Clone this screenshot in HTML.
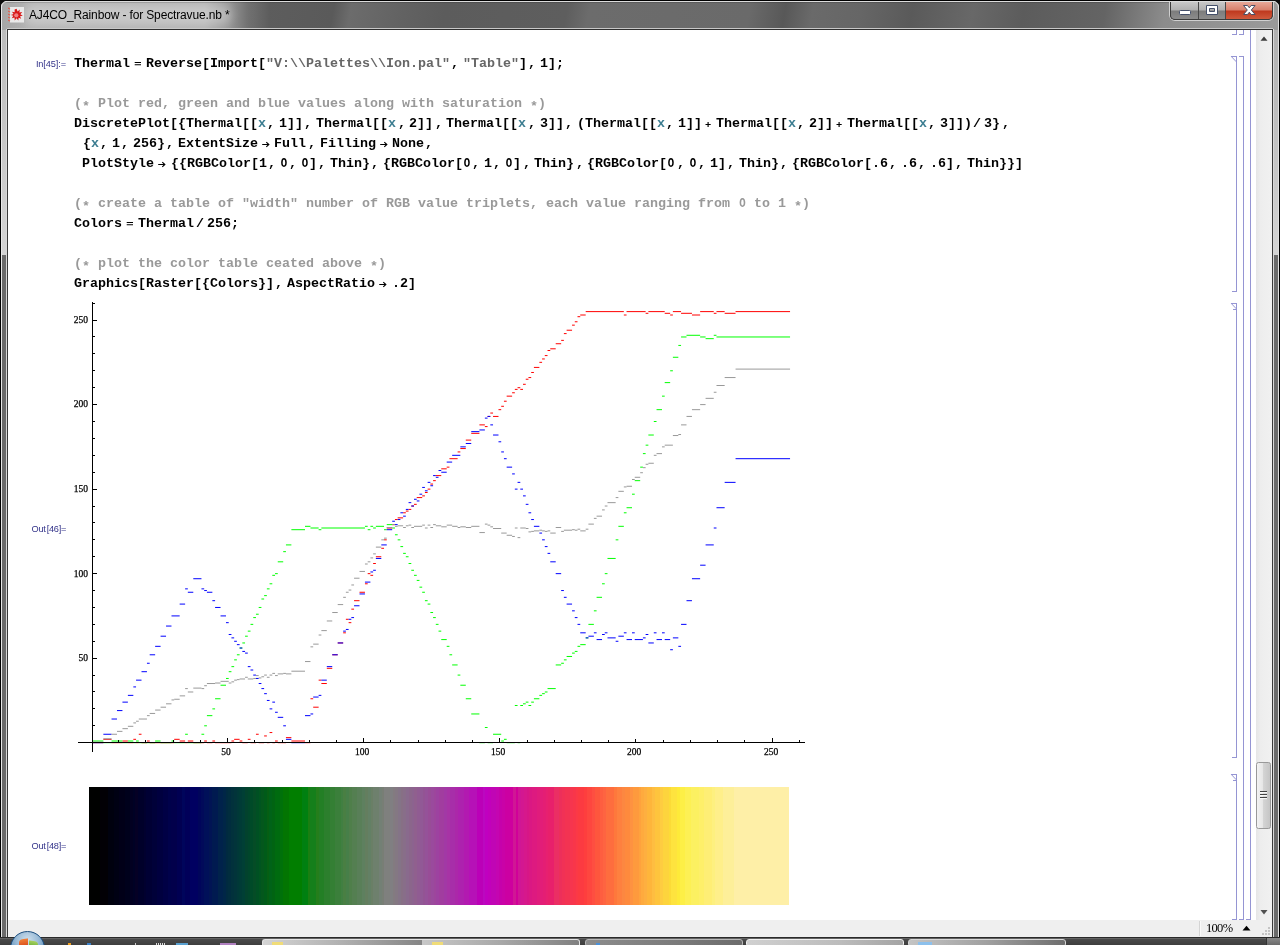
<!DOCTYPE html>
<html><head><meta charset="utf-8"><title>AJ4CO_Rainbow</title>
<style>
html,body{margin:0;padding:0;background:#fff;}
body{width:1280px;height:945px;overflow:hidden;position:relative;font-family:"Liberation Sans",sans-serif;}
.abs{position:absolute;}
.c,.lb,.tk,#title{will-change:transform;}
#frame{position:absolute;left:0;top:0;width:1280px;height:945px;background:#6a6a6a;}
#tb{position:absolute;left:0;top:0;width:1280px;height:30px;overflow:hidden;background:linear-gradient(100deg,#6a6a6a 0px,#5e5e5e 240px,#5a5a5a 330px,#6c6c6c 347px,#626262 400px,#5c5c5c 440px,#5e5e5e 560px,#6c6c6c 582px,#6a6a6a 740px,#585858 775px,#6a6a6a 802px,#666 850px,#5a5a5a 900px,#686868 960px,#5c5c5c 1010px,#646464 1090px,#8c8c8c 1150px,#9c9c9c 1279px);}
#glow{position:absolute;left:0;top:0;width:300px;height:30px;background:linear-gradient(90deg,rgba(255,255,255,.40) 0,rgba(255,255,255,.50) 30px,rgba(255,255,255,.52) 205px,rgba(255,255,255,.36) 228px,rgba(255,255,255,.12) 248px,rgba(255,255,255,0) 270px);}
#glow2{position:absolute;left:24px;top:5px;width:208px;height:20px;border-radius:10px;background:rgba(255,255,255,.28);filter:blur(4px);}
#tbtop{position:absolute;left:0;top:0;width:1280px;height:1px;background:#000;}
#tbhi{position:absolute;left:1px;top:1px;width:1278px;height:1px;background:#dcdcdc;}
#tbsh{position:absolute;left:2px;top:2px;width:1276px;height:1px;background:rgba(0,0,0,.15);}
#title{position:absolute;left:29px;top:7px;font-size:12px;line-height:16px;color:#000;white-space:pre;letter-spacing:-0.14px;}
#content{position:absolute;left:8px;top:30px;width:1264px;height:906px;background:#fff;}
.c{position:absolute;font-family:"Liberation Mono",monospace;font-weight:bold;font-size:12px;letter-spacing:0;line-height:16px;height:16px;white-space:pre;transform:scaleX(1.1111);transform-origin:0 0;}
.st{position:relative;top:2.5px}
.z{display:inline-block;width:7.2px;text-align:center;transform:scaleX(.8)}
.k{color:#000}.s{color:#666}.v{color:#3c7d91}.m{color:#999}
.ar{font-family:"Liberation Sans",sans-serif;font-weight:normal;font-size:9px;letter-spacing:0;color:#000;line-height:17px}
.lb{position:absolute;font-size:9.2px;line-height:12px;color:#34348a;white-space:pre;text-align:right;width:60px;letter-spacing:-0.1px}
.lo{letter-spacing:-0.3px}
.tk{position:absolute;font-family:"Liberation Serif",serif;font-size:9.5px;line-height:12px;color:#000;-webkit-text-stroke:0.25px #000;}
</style></head><body>
<div id="frame"></div>
<div id="tb"><div id="glow"></div><div id="glow2"></div></div><div id="tbtop"></div><div id="tbhi"></div><div id="tbsh"></div>

<!-- left frame -->
<div class="abs" style="left:0;top:0;width:1px;height:945px;background:#000"></div>
<div class="abs" style="left:1px;top:1px;width:1px;height:937px;background:#e8e8e8"></div>
<div class="abs" style="left:2px;top:30px;width:5px;height:225px;background:linear-gradient(180deg,#bcbcbc,#d4d4d4)"></div>
<div class="abs" style="left:2px;top:255px;width:5px;height:682px;background:#6b6b6b"></div>
<div class="abs" style="left:6px;top:29px;width:1px;height:908px;background:#d8d8d8"></div>
<div class="abs" style="left:7px;top:29px;width:1px;height:908px;background:#3a3a3a"></div>
<!-- right frame -->
<div class="abs" style="left:1279px;top:0;width:1px;height:945px;background:#000"></div>
<div class="abs" style="left:1278px;top:1px;width:1px;height:937px;background:#e0e0e0"></div>
<div class="abs" style="left:1274px;top:30px;width:4px;height:225px;background:linear-gradient(180deg,#b0b0b0,#d4d4d4)"></div>
<div class="abs" style="left:1274px;top:255px;width:4px;height:682px;background:#6b6b6b"></div>
<div class="abs" style="left:1273px;top:29px;width:1px;height:908px;background:#d8d8d8"></div>
<div class="abs" style="left:1272px;top:29px;width:1px;height:908px;background:#3a3a3a"></div>
<!-- title bottom edge -->
<div class="abs" style="left:7px;top:28px;width:1266px;height:1px;background:#c8c8c8"></div>
<div class="abs" style="left:7px;top:29px;width:1266px;height:1px;background:#303030"></div>
<!-- corners -->
<svg class="abs" style="left:0;top:0" width="10" height="10"><path d="M0 0H10V1H7C3.500 1 1 3.500 1 7V10H0Z" fill="#0c0c0c"/><path d="M7 1.500C4 1.500 1.500 4 1.500 7" stroke="#e4e4e4" fill="none"/></svg>
<svg class="abs" style="left:1270px;top:0" width="10" height="10"><path d="M10 0H0V1H3C6.500 1 9 3.500 9 7V10H10Z" fill="#0c0c0c"/><path d="M3 1.500C6 1.500 8.500 4 8.500 7" stroke="#e4e4e4" fill="none"/></svg>
<!-- app icon -->
<svg class="abs" style="left:8px;top:7px" width="17" height="16" viewBox="0 0 17 16">
<rect x="2" y="0" width="14" height="15.5" fill="#e9e9e9"/>
<path d="M0 1l2 1M0 4l2 1M0 7l2 1M0 10l2 1M0 13l2 1" stroke="#e06050" stroke-width="1.2"/>
<path d="M8.6 1.8l1 2.6 2.2-1.8-.4 2.8 2.9-.3-1.9 2.1 2.4 1.5-2.8.5 1.2 2.5-2.6-.9-.3 2.8-1.7-2.3-1.9 2.1-.2-2.8-2.7.6 1.5-2.4L2.900 8.100l2.700-1-1.700-2.300 2.800.5-.1-2.800z" fill="#d81818"/>
<circle cx="8.3" cy="8.3" r="2.1" fill="#f08080"/>
</svg>
<!-- caption buttons -->
<div class="abs" style="left:1169px;top:2px;width:105px;height:19px;border:1px solid #d0d0d0;border-top:none;border-radius:0 0 6px 6px;box-sizing:border-box;background:#444"></div>
<div class="abs" style="left:1170px;top:2px;width:103px;height:18px;border-radius:0 0 5px 5px;overflow:hidden;border:1px solid #3c3c3c;border-top:none;box-sizing:border-box">
 <div class="abs" style="left:0;top:0;width:27px;height:19px;background:linear-gradient(180deg,#c8c8c8 0,#b0b0b0 8px,#7c7c7c 9px,#909090 19px)"></div>
 <div class="abs" style="left:27px;top:0;width:1px;height:19px;background:#484848"></div>
 <div class="abs" style="left:28px;top:0;width:26px;height:19px;background:linear-gradient(180deg,#c8c8c8 0,#b0b0b0 8px,#7c7c7c 9px,#909090 19px)"></div>
 <div class="abs" style="left:54px;top:0;width:1px;height:19px;background:#484848"></div>
 <div class="abs" style="left:55px;top:0;width:48px;height:19px;background:linear-gradient(180deg,#e8a898 0,#d8806c 8px,#bf381e 9px,#d46244 19px)"></div>
</div>
<svg class="abs" style="left:1170px;top:0" width="104" height="20" viewBox="0 0 104 20">
 <rect x="9.500" y="10.500" width="11" height="4" rx="1" fill="#fff" stroke="#45506a" stroke-width="1"/>
 <path d="M36.500 5.500h11v9h-11zM39.500 8.500h5v3h-5z" fill="#fff" fill-rule="evenodd" stroke="#45506a" stroke-width="1"/>
 <path d="M73.500 5.500h4l1.800 2.300 1.800-2.300h4l-3.800 4.500 3.800 4.500h-4l-1.800-2.300-1.800 2.300h-4l3.800-4.500z" fill="#fff" stroke="#4a4f66" stroke-width="1" stroke-linejoin="round"/>
</svg>

<div id="title">AJ4CO_Rainbow - for Spectravue.nb *</div>
<div id="content"></div>
<div class="lb" style="left:6px;top:57.500px">In[45]:=</div>
<div class="lb lo" style="left:6px;top:522.500px">Out<span style="margin-left:1.3px">[46]=</span></div>
<div class="lb lo" style="left:6px;top:839.500px">Out<span style="margin-left:1.3px">[48]=</span></div>
<span class="c k" style="left:74.00px;top:56px">Thermal</span><svg class="abs" style="left:134.20px;top:56px" width="9" height="16" viewBox="0 0 9 16"><path d="M0.700 6.500H7M0.700 8.700H7" stroke="#000" stroke-width="1.15" fill="none"/></svg><span class="c k" style="left:145.50px;top:56px">Reverse[Import[</span><span class="c s" style="left:265.50px;top:56px">"V:\\Palettes\\Ion.pal"</span><span class="c k" style="left:450.80px;top:56px">,</span><span class="c s" style="left:462.60px;top:56px">"Table"</span><span class="c k" style="left:518.60px;top:56px">]</span><span class="c k" style="left:527.90px;top:56px">,</span><span class="c k" style="left:539.70px;top:56px">1]</span><span class="c k" style="left:555.70px;top:56px">;</span>
<span class="c m" style="left:74.00px;top:96px">(<span class="st">*</span> Plot red, green and blue values along with saturation <span class="st">*</span>)</span>
<span class="c k" style="left:74.00px;top:116px">DiscretePlot[{</span><span class="c k" style="left:186.00px;top:116px">Thermal[[</span><span class="c v" style="left:258.00px;top:116px">x</span><span class="c k" style="left:267.30px;top:116px">,</span><span class="c k" style="left:279.10px;top:116px">1]]</span><span class="c k" style="left:304.40px;top:116px">,</span><span class="c k" style="left:316.20px;top:116px">Thermal[[</span><span class="c v" style="left:388.20px;top:116px">x</span><span class="c k" style="left:397.50px;top:116px">,</span><span class="c k" style="left:409.30px;top:116px">2]]</span><span class="c k" style="left:434.60px;top:116px">,</span><span class="c k" style="left:446.40px;top:116px">Thermal[[</span><span class="c v" style="left:518.40px;top:116px">x</span><span class="c k" style="left:527.70px;top:116px">,</span><span class="c k" style="left:539.50px;top:116px">3]]</span><span class="c k" style="left:564.80px;top:116px">,</span><span class="c k" style="left:576.60px;top:116px">(</span><span class="c k" style="left:584.60px;top:116px">Thermal[[</span><span class="c v" style="left:656.60px;top:116px">x</span><span class="c k" style="left:665.90px;top:116px">,</span><span class="c k" style="left:677.70px;top:116px">1]]</span><svg class="abs" style="left:703.70px;top:116px" width="9" height="16" viewBox="0 0 9 16"><path d="M1.500 8.500H6.700M4.100 6V11" stroke="#000" stroke-width="1.15" fill="none"/></svg><span class="c k" style="left:715.70px;top:116px">Thermal[[</span><span class="c v" style="left:787.70px;top:116px">x</span><span class="c k" style="left:797.00px;top:116px">,</span><span class="c k" style="left:808.80px;top:116px">2]]</span><svg class="abs" style="left:834.80px;top:116px" width="9" height="16" viewBox="0 0 9 16"><path d="M1.500 8.500H6.700M4.100 6V11" stroke="#000" stroke-width="1.15" fill="none"/></svg><span class="c k" style="left:846.80px;top:116px">Thermal[[</span><span class="c v" style="left:918.80px;top:116px">x</span><span class="c k" style="left:928.10px;top:116px">,</span><span class="c k" style="left:939.90px;top:116px">3]]</span><span class="c k" style="left:963.90px;top:116px">)</span><span class="c k" style="left:973.40px;top:116px">/</span><span class="c k" style="left:984.40px;top:116px">3}</span><span class="c k" style="left:1001.70px;top:116px">,</span>
<span class="c k" style="left:82.50px;top:136px">{</span><span class="c v" style="left:90.50px;top:136px">x</span><span class="c k" style="left:99.80px;top:136px">,</span><span class="c k" style="left:111.60px;top:136px">1</span><span class="c k" style="left:120.90px;top:136px">,</span><span class="c k" style="left:132.70px;top:136px">256}</span><span class="c k" style="left:166.00px;top:136px">,</span><span class="c k" style="left:177.80px;top:136px">ExtentSize</span><svg class="abs" style="left:262.10px;top:136px" width="9" height="16" viewBox="0 0 9 16"><path d="M0.2 8.500H7M4.300 6.200L6.800 8.500L4.300 10.800" stroke="#000" stroke-width="1.15" fill="none"/></svg><span class="c k" style="left:274.40px;top:136px">Full</span><span class="c k" style="left:307.70px;top:136px">,</span><span class="c k" style="left:319.50px;top:136px">Filling</span><svg class="abs" style="left:379.80px;top:136px" width="9" height="16" viewBox="0 0 9 16"><path d="M0.2 8.500H7M4.300 6.200L6.800 8.500L4.300 10.800" stroke="#000" stroke-width="1.15" fill="none"/></svg><span class="c k" style="left:392.10px;top:136px">None</span><span class="c k" style="left:425.40px;top:136px">,</span>
<span class="c k" style="left:82.00px;top:156px">PlotStyle</span><svg class="abs" style="left:158.30px;top:156px" width="9" height="16" viewBox="0 0 9 16"><path d="M0.2 8.500H7M4.300 6.200L6.800 8.500L4.300 10.800" stroke="#000" stroke-width="1.15" fill="none"/></svg><span class="c k" style="left:170.60px;top:156px">{</span><span class="c k" style="left:178.60px;top:156px">{RGBColor[</span><span class="c k" style="left:258.60px;top:156px">1</span><span class="c k" style="left:267.90px;top:156px">,</span><span class="c k" style="left:279.70px;top:156px"><span class="z">O</span></span><span class="c k" style="left:289.00px;top:156px">,</span><span class="c k" style="left:300.80px;top:156px"><span class="z">O</span>]</span><span class="c k" style="left:318.10px;top:156px">,</span><span class="c k" style="left:329.90px;top:156px">Thin}</span><span class="c k" style="left:371.20px;top:156px">,</span><span class="c k" style="left:383.00px;top:156px">{RGBColor[</span><span class="c k" style="left:463.00px;top:156px"><span class="z">O</span></span><span class="c k" style="left:472.30px;top:156px">,</span><span class="c k" style="left:484.10px;top:156px">1</span><span class="c k" style="left:493.40px;top:156px">,</span><span class="c k" style="left:505.20px;top:156px"><span class="z">O</span>]</span><span class="c k" style="left:522.50px;top:156px">,</span><span class="c k" style="left:534.30px;top:156px">Thin}</span><span class="c k" style="left:575.60px;top:156px">,</span><span class="c k" style="left:587.40px;top:156px">{RGBColor[</span><span class="c k" style="left:667.40px;top:156px"><span class="z">O</span></span><span class="c k" style="left:676.70px;top:156px">,</span><span class="c k" style="left:688.50px;top:156px"><span class="z">O</span></span><span class="c k" style="left:697.80px;top:156px">,</span><span class="c k" style="left:709.60px;top:156px">1]</span><span class="c k" style="left:726.90px;top:156px">,</span><span class="c k" style="left:738.70px;top:156px">Thin}</span><span class="c k" style="left:780.00px;top:156px">,</span><span class="c k" style="left:791.80px;top:156px">{RGBColor[</span><span class="c k" style="left:871.80px;top:156px">.6</span><span class="c k" style="left:889.10px;top:156px">,</span><span class="c k" style="left:900.90px;top:156px">.6</span><span class="c k" style="left:918.20px;top:156px">,</span><span class="c k" style="left:930.00px;top:156px">.6]</span><span class="c k" style="left:955.30px;top:156px">,</span><span class="c k" style="left:967.10px;top:156px">Thin}</span><span class="c k" style="left:1007.10px;top:156px">}]</span>
<span class="c m" style="left:74.00px;top:196px">(<span class="st">*</span> create a table of "width" number of RGB value triplets, each value ranging from <span class="z">O</span> to 1 <span class="st">*</span>)</span>
<span class="c k" style="left:74.00px;top:216px">Colors</span><svg class="abs" style="left:126.20px;top:216px" width="9" height="16" viewBox="0 0 9 16"><path d="M0.700 6.500H7M0.700 8.700H7" stroke="#000" stroke-width="1.15" fill="none"/></svg><span class="c k" style="left:137.50px;top:216px">Thermal</span><span class="c k" style="left:196.20px;top:216px">/</span><span class="c k" style="left:206.50px;top:216px">256</span><span class="c k" style="left:230.50px;top:216px">;</span>
<span class="c m" style="left:74.00px;top:256px">(<span class="st">*</span> plot the color table ceated above <span class="st">*</span>)</span>
<span class="c k" style="left:74.00px;top:276px">Graphics[Raster[{Colors}]</span><span class="c k" style="left:275.30px;top:276px">,</span><span class="c k" style="left:287.10px;top:276px">AspectRatio</span><svg class="abs" style="left:379.40px;top:276px" width="9" height="16" viewBox="0 0 9 16"><path d="M0.2 8.500H7M4.300 6.200L6.800 8.500L4.300 10.800" stroke="#000" stroke-width="1.15" fill="none"/></svg><span class="c k" style="left:391.70px;top:276px">.2]</span>
<svg class="abs" style="left:0;top:0" width="1280" height="945" viewBox="0 0 1280 945">
<g fill="none" stroke-width="1"><path d="M92.46 742.70H103.36M103.36 739.32H111.54M111.54 742.70H122.44M122.44 741.01H127.89M127.89 742.70H133.34M133.34 739.32H136.06M136.06 742.70H138.79M138.79 734.25H141.51M141.51 742.70H146.96M146.96 741.01H149.69M149.69 742.70H174.21M174.21 739.32H179.66M179.66 741.01H185.11M185.11 742.70H187.84M187.84 741.01H193.29M193.29 742.70H204.19M204.19 741.01H206.91M206.91 742.70H212.36M212.36 741.01H215.09M215.09 742.70H231.44M231.44 741.01H234.16M234.16 739.32H239.61M239.61 741.01H242.34M242.34 742.70H247.79M247.79 739.32H250.51M250.51 742.70H255.96M255.96 734.25H258.69M258.69 742.70H264.14M264.14 735.94H266.86M266.86 742.70H269.59M269.59 732.56H272.31M272.31 742.70H275.04M275.04 741.01H277.76M277.76 742.70H285.94M285.94 737.63H291.39M291.39 741.01H305.01M305.01 742.70H310.46M310.46 698.75H313.19M313.19 707.20H318.64M318.64 680.15H321.36M321.36 683.53H326.81M326.81 668.32H332.26M332.26 654.79H337.71M337.71 642.96H343.16M343.16 632.82H345.89M345.89 619.29H348.61M348.61 622.67H351.34M351.34 609.15H354.06M354.06 600.70H359.51M359.51 592.25H364.96M364.96 583.79H367.69M367.69 573.65H370.41M370.41 575.34H373.14M373.14 563.51H375.86M375.86 556.75H381.31M381.31 548.29H384.04M384.04 539.84H386.76M386.76 528.01H392.21M392.21 524.63H394.94M394.94 519.55H397.66M397.66 517.86H403.11M403.11 512.79H405.84M405.84 511.10H408.56M408.56 509.41H411.29M411.29 506.03H414.01M414.01 504.34H416.74M416.74 497.58H422.19M422.19 495.89H424.91M424.91 492.51H427.64M427.64 489.13H430.36M430.36 484.05H433.09M433.09 480.67H435.81M435.81 475.60H441.26M441.26 468.84H446.71M446.71 467.15H449.44M449.44 458.70H457.61M457.61 451.93H460.34M460.34 448.55H465.79M465.79 440.10H471.24M471.24 433.34H479.41M479.41 424.89H484.86M484.86 426.58H487.59M487.59 416.43H490.31M490.31 413.05H493.04M493.04 416.43H498.49M498.49 409.67H501.21M501.21 406.29H503.94M503.94 401.22H506.66M506.66 396.15H512.11M512.11 392.77H514.84M514.84 389.39H517.56M517.56 387.70H520.29M520.29 389.39H523.01M523.01 384.31H525.74M525.74 379.24H528.46M528.46 377.55H531.19M531.19 372.48H533.91M533.91 367.41H539.36M539.36 362.34H542.09M542.09 358.96H544.81M544.81 355.58H547.54M547.54 350.50H550.26M550.26 348.81H555.71M555.71 343.74H561.16M561.16 340.36H563.89M563.89 333.60H566.61M566.61 330.22H572.06M572.06 325.15H574.79M574.79 321.77H577.51M577.51 316.69H580.24M580.24 315.00H585.69M585.69 311.62H623.84M623.84 315.00H626.56M626.56 311.62H645.64M645.64 313.31H648.36M648.36 311.62H664.71M664.71 313.31H670.16M670.16 315.00H672.89M672.89 311.62H681.06M681.06 313.31H691.96M691.96 315.00H700.14M700.14 311.62H713.76M713.76 313.31H716.49M716.49 311.62H724.66M724.66 313.31H735.56M735.56 311.62H790.06" stroke="#ff0000"/>
<path d="M92.46 741.01H103.36M103.36 742.70H111.54M111.54 741.01H122.44M122.44 742.70H127.89M127.89 741.01H133.34M133.34 742.70H136.06M136.06 741.01H138.79M138.79 742.70H155.14M155.14 741.01H160.59M160.59 742.70H171.49M171.49 741.01H174.21M174.21 742.70H185.11M185.11 734.25H187.84M187.84 742.70H201.46M201.46 734.25H204.19M204.19 725.80H206.91M206.91 715.65H212.36M212.36 708.89H215.09M215.09 698.75H220.54M220.54 685.22H225.99M225.99 678.46H228.71M228.71 671.70H231.44M231.44 666.63H234.16M234.16 659.87H236.89M236.89 654.79H239.61M239.61 648.03H242.34M242.34 642.96H245.06M245.06 636.20H247.79M247.79 631.13H250.51M250.51 624.37H253.24M253.24 617.60H255.96M255.96 614.22H258.69M258.69 607.46H261.41M261.41 599.01H264.14M264.14 595.63H266.86M266.86 588.86H269.59M269.59 583.79H272.31M272.31 575.34H275.04M275.04 573.65H277.76M277.76 561.82H283.21M283.21 551.67H285.94M285.94 544.91H291.39M291.39 529.70H305.01M305.01 526.32H310.46M310.46 528.01H318.64M318.64 529.70H321.36M321.36 528.01H364.96M364.96 526.32H367.69M367.69 529.70H370.41M370.41 526.32H373.14M373.14 528.01H375.86M375.86 526.32H384.04M384.04 529.70H386.76M386.76 524.63H392.21M392.21 528.01H394.94M394.94 534.77H397.66M397.66 539.84H400.39M400.39 546.60H403.11M403.11 553.36H405.84M405.84 556.75H408.56M408.56 563.51H411.29M411.29 570.27H414.01M414.01 575.34H416.74M416.74 580.41H419.46M419.46 587.17H422.19M422.19 592.25H424.91M424.91 600.70H427.64M427.64 604.08H430.36M430.36 612.53H433.09M433.09 617.60H435.81M435.81 624.37H438.54M438.54 631.13H441.26M441.26 639.58H446.71M446.71 646.34H449.44M449.44 654.79H452.16M452.16 664.94H457.61M457.61 675.08H460.34M460.34 685.22H465.79M465.79 698.75H471.24M471.24 713.96H479.41M479.41 742.70H484.86M484.86 727.49H487.59M487.59 742.70H493.04M493.04 734.25H501.21M501.21 741.01H503.94M503.94 739.32H506.66M506.66 742.70H514.84M514.84 705.51H517.56M517.56 742.70H520.29M520.29 705.51H523.01M523.01 703.82H525.74M525.74 702.13H528.46M528.46 705.51H531.19M531.19 702.13H533.91M533.91 698.75H539.36M539.36 695.37H542.09M542.09 693.68H544.81M544.81 691.99H547.54M547.54 688.60H555.71M555.71 664.94H561.16M561.16 663.25H563.89M563.89 659.87H566.61M566.61 656.48H572.06M572.06 653.10H574.79M574.79 651.41H577.51M577.51 646.34H580.24M580.24 644.65H585.69M585.69 637.89H588.41M588.41 624.37H593.86M593.86 610.84H596.59M596.59 597.32H602.04M602.04 583.79H604.76M604.76 573.65H607.49M607.49 558.44H615.66M615.66 539.84H618.39M618.39 526.32H623.84M623.84 512.79H626.56M626.56 507.72H632.01M632.01 494.20H634.74M634.74 480.67H640.19M640.19 467.15H642.91M642.91 453.62H645.64M645.64 445.17H648.36M648.36 435.03H653.81M653.81 421.51H656.54M656.54 409.67H661.99M661.99 396.15H664.71M664.71 382.62H670.16M670.16 370.79H672.89M672.89 357.27H678.34M678.34 345.43H681.06M681.06 336.98H686.51M686.51 335.29H700.14M700.14 336.98H705.59M705.59 338.67H713.76M713.76 335.29H716.49M716.49 336.98H790.06" stroke="#00ff00"/>
<path d="M92.46 742.70H103.36M103.36 734.25H111.54M111.54 719.03H116.99M116.99 710.58H122.44M122.44 702.13H127.89M127.89 695.37H133.34M133.34 686.91H136.06M136.06 680.15H141.51M141.51 671.70H146.96M146.96 663.25H149.69M149.69 654.79H155.14M155.14 646.34H160.59M160.59 636.20H166.04M166.04 626.06H171.49M171.49 615.91H179.66M179.66 604.08H185.11M185.11 588.86H187.84M187.84 592.25H193.29M193.29 578.72H201.46M201.46 588.86H204.19M204.19 590.56H206.91M206.91 592.25H212.36M212.36 600.70H215.09M215.09 607.46H220.54M220.54 615.91H225.99M225.99 622.67H228.71M228.71 634.51H231.44M231.44 637.89H234.16M234.16 641.27H236.89M236.89 644.65H239.61M239.61 648.03H242.34M242.34 651.41H245.06M245.06 653.10H247.79M247.79 666.63H250.51M250.51 670.01H253.24M253.24 675.08H255.96M255.96 678.46H258.69M258.69 683.53H261.41M261.41 688.60H264.14M264.14 693.68H266.86M266.86 700.44H269.59M269.59 708.89H272.31M272.31 702.13H275.04M275.04 712.27H277.76M277.76 717.34H283.21M283.21 725.80H285.94M285.94 739.32H291.39M291.39 742.70H305.01M305.01 715.65H310.46M310.46 713.96H313.19M313.19 697.06H318.64M318.64 695.37H321.36M321.36 680.15H326.81M326.81 666.63H332.26M332.26 654.79H337.71M337.71 642.96H343.16M343.16 631.13H345.89M345.89 629.44H348.61M348.61 619.29H351.34M351.34 617.60H354.06M354.06 605.77H359.51M359.51 593.94H364.96M364.96 582.10H370.41M370.41 571.96H373.14M373.14 570.27H375.86M375.86 558.44H381.31M381.31 544.91H386.76M386.76 529.70H392.21M392.21 521.24H394.94M394.94 524.63H397.66M397.66 519.55H400.39M400.39 512.79H403.11M403.11 516.17H405.84M405.84 509.41H408.56M408.56 502.65H411.29M411.29 506.03H414.01M414.01 499.27H416.74M416.74 500.96H419.46M419.46 494.20H422.19M422.19 487.43H424.91M424.91 490.82H427.64M427.64 482.36H430.36M430.36 485.74H433.09M433.09 475.60H435.81M435.81 477.29H438.54M438.54 470.53H441.26M441.26 472.22H446.71M446.71 462.08H452.16M452.16 455.32H460.34M460.34 446.86H465.79M465.79 443.48H471.24M471.24 431.65H479.41M479.41 429.96H484.86M484.86 418.12H487.59M487.59 416.43H490.31M490.31 424.89H493.04M493.04 435.03H498.49M498.49 441.79H501.21M501.21 451.93H503.94M503.94 458.70H506.66M506.66 467.15H512.11M512.11 473.91H514.84M514.84 489.13H517.56M517.56 482.36H520.29M520.29 489.13H523.01M523.01 495.89H525.74M525.74 504.34H528.46M528.46 512.79H531.19M531.19 519.55H533.91M533.91 526.32H539.36M539.36 533.08H542.09M542.09 539.84H544.81M544.81 546.60H547.54M547.54 553.36H550.26M550.26 561.82H555.71M555.71 573.65H561.16M561.16 590.56H563.89M563.89 597.32H566.61M566.61 604.08H572.06M572.06 610.84H574.79M574.79 617.60H577.51M577.51 624.37H580.24M580.24 632.82H585.69M585.69 637.89H588.41M588.41 636.20H593.86M593.86 632.82H596.59M596.59 639.58H602.04M602.04 634.51H604.76M604.76 632.82H607.49M607.49 637.89H615.66M615.66 641.27H618.39M618.39 636.20H623.84M623.84 632.82H626.56M626.56 639.58H632.01M632.01 632.82H634.74M634.74 639.58H642.91M642.91 637.89H645.64M645.64 634.51H648.36M648.36 642.96H653.81M653.81 632.82H656.54M656.54 639.58H661.99M661.99 632.82H664.71M664.71 639.58H670.16M670.16 649.72H672.89M672.89 637.89H678.34M678.34 646.34H681.06M681.06 624.37H686.51M686.51 600.70H691.96M691.96 578.72H700.14M700.14 565.20H705.59M705.59 544.91H713.76M713.76 528.01H716.49M716.49 507.72H724.66M724.66 482.36H735.56M735.56 458.70H790.06" stroke="#0000ff"/>
<path d="M92.46 742.19H103.36M103.36 738.81H111.54M111.54 734.25H116.99M116.99 731.37H122.44M122.44 728.67H127.89M127.89 726.30H133.34M133.34 722.92H136.06M136.06 721.23H138.79M138.79 719.03H146.96M146.96 715.65H149.69M149.69 713.45H155.14M155.14 710.07H160.59M160.59 707.20H166.04M166.04 703.82H171.49M171.49 699.93H174.21M174.21 699.25H179.66M179.66 695.87H185.11M185.11 688.60H187.84M187.84 691.99H193.29M193.29 688.10H201.46M201.46 688.60H204.19M204.19 685.73H206.91M206.91 683.53H215.09M215.09 683.03H220.54M220.54 681.33H228.71M228.71 683.03H231.44M231.44 681.84H234.16M234.16 680.15H236.89M236.89 679.64H239.61M239.61 678.97H245.06M245.06 677.28H247.79M247.79 678.97H253.24M253.24 678.46H255.96M255.96 675.59H258.69M258.69 677.95H261.41M261.41 676.77H264.14M264.14 675.08H266.86M266.86 677.28H269.59M269.59 675.08H272.31M272.31 673.39H275.04M275.04 675.59H277.76M277.76 673.90H283.21M283.21 673.39H285.94M285.94 673.90H291.39M291.39 671.19H305.01M305.01 661.56H310.46M310.46 646.85H313.19M313.19 644.14H318.64M318.64 635.02H321.36M321.36 630.62H326.81M326.81 620.98H332.26M332.26 612.53H337.71M337.71 604.59H343.16M343.16 597.32H345.89M345.89 592.25H348.61M348.61 590.05H351.34M351.34 584.98H354.06M354.06 578.21H359.51M359.51 571.45H364.96M364.96 564.01H367.69M367.69 561.82H370.41M370.41 557.93H373.14M373.14 553.87H375.86M375.86 547.11H381.31M381.31 539.84H384.04M384.04 538.15H386.76M386.76 527.50H392.21M392.21 524.63H394.94M394.94 526.32H397.66M397.66 525.81H403.11M403.11 527.50H405.84M405.84 525.81H408.56M408.56 525.13H411.29M411.29 527.50H414.01M414.01 526.32H422.19M422.19 525.13H424.91M424.91 528.01H427.64M427.64 525.13H430.36M430.36 527.50H433.09M433.09 524.63H435.81M435.81 525.81H441.26M441.26 526.82H446.71M446.71 525.13H452.16M452.16 526.32H457.61M457.61 527.50H460.34M460.34 526.82H465.79M465.79 527.50H471.24M471.24 526.32H479.41M479.41 532.57H484.86M484.86 524.12H487.59M487.59 525.13H490.31M490.31 526.82H493.04M493.04 528.51H501.21M501.21 533.08H506.66M506.66 535.28H512.11M512.11 536.46H514.84M514.84 528.01H517.56M517.56 537.64H520.29M520.29 528.01H525.74M525.74 528.51H528.46M528.46 531.89H531.19M531.19 531.39H533.91M533.91 530.88H539.36M539.36 530.20H542.09M542.09 530.88H544.81M544.81 531.39H547.54M547.54 530.88H550.26M550.26 533.08H555.71M555.71 527.50H561.16M561.16 531.39H563.89M563.89 530.20H572.06M572.06 529.70H574.79M574.79 530.20H577.51M577.51 529.19H580.24M580.24 530.88H585.69M585.69 529.19H588.41M588.41 524.12H593.86M593.86 518.37H596.59M596.59 516.17H602.04M602.04 509.92H604.76M604.76 506.03H607.49M607.49 502.65H615.66M615.66 497.58H618.39M618.39 491.32H623.84M623.84 486.93H626.56M626.56 486.25H632.01M632.01 479.49H634.74M634.74 477.29H640.19M640.19 472.73H642.91M642.91 467.66H645.64M645.64 464.27H648.36M648.36 463.26H653.81M653.81 455.32H656.54M656.54 453.62H661.99M661.99 446.86H664.71M664.71 445.17H672.89M672.89 435.54H678.34M678.34 434.52H681.06M681.06 424.89H686.51M686.51 416.43H691.96M691.96 409.67H700.14M700.14 404.60H705.59M705.59 398.35H713.76M713.76 392.26H716.49M716.49 385.50H724.66M724.66 377.55H735.56M735.56 369.10H790.06" stroke="#999999"/></g>
<rect x="78" y="742" width="727" height="1" fill="#000"/><rect x="92" y="302" width="1" height="450" fill="#000"/><rect x="118" y="740" width="1" height="2" fill="#000"/><rect x="145" y="740" width="1" height="2" fill="#000"/><rect x="173" y="740" width="1" height="2" fill="#000"/><rect x="200" y="740" width="1" height="2" fill="#000"/><rect x="227" y="738" width="1" height="4" fill="#000"/><rect x="254" y="740" width="1" height="2" fill="#000"/><rect x="282" y="740" width="1" height="2" fill="#000"/><rect x="309" y="740" width="1" height="2" fill="#000"/><rect x="336" y="740" width="1" height="2" fill="#000"/><rect x="363" y="738" width="1" height="4" fill="#000"/><rect x="390" y="740" width="1" height="2" fill="#000"/><rect x="418" y="740" width="1" height="2" fill="#000"/><rect x="445" y="740" width="1" height="2" fill="#000"/><rect x="472" y="740" width="1" height="2" fill="#000"/><rect x="499" y="738" width="1" height="4" fill="#000"/><rect x="527" y="740" width="1" height="2" fill="#000"/><rect x="554" y="740" width="1" height="2" fill="#000"/><rect x="581" y="740" width="1" height="2" fill="#000"/><rect x="608" y="740" width="1" height="2" fill="#000"/><rect x="635" y="739" width="1" height="3" fill="#000"/><rect x="663" y="740" width="1" height="2" fill="#000"/><rect x="690" y="740" width="1" height="2" fill="#000"/><rect x="717" y="740" width="1" height="2" fill="#000"/><rect x="744" y="740" width="1" height="2" fill="#000"/><rect x="772" y="738" width="1" height="4" fill="#000"/><rect x="799" y="740" width="1" height="2" fill="#000"/><rect x="93" y="725" width="2" height="1" fill="#000"/><rect x="93" y="708" width="2" height="1" fill="#000"/><rect x="93" y="691" width="2" height="1" fill="#000"/><rect x="93" y="675" width="2" height="1" fill="#000"/><rect x="93" y="658" width="4" height="1" fill="#000"/><rect x="93" y="641" width="2" height="1" fill="#000"/><rect x="93" y="624" width="2" height="1" fill="#000"/><rect x="93" y="607" width="2" height="1" fill="#000"/><rect x="93" y="590" width="2" height="1" fill="#000"/><rect x="93" y="573" width="4" height="1" fill="#000"/><rect x="93" y="556" width="2" height="1" fill="#000"/><rect x="93" y="539" width="2" height="1" fill="#000"/><rect x="93" y="522" width="2" height="1" fill="#000"/><rect x="93" y="506" width="2" height="1" fill="#000"/><rect x="93" y="489" width="4" height="1" fill="#000"/><rect x="93" y="472" width="2" height="1" fill="#000"/><rect x="93" y="455" width="2" height="1" fill="#000"/><rect x="93" y="438" width="2" height="1" fill="#000"/><rect x="93" y="421" width="2" height="1" fill="#000"/><rect x="93" y="404" width="4" height="1" fill="#000"/><rect x="93" y="387" width="2" height="1" fill="#000"/><rect x="93" y="370" width="2" height="1" fill="#000"/><rect x="93" y="353" width="2" height="1" fill="#000"/><rect x="93" y="336" width="2" height="1" fill="#000"/><rect x="93" y="320" width="4" height="1" fill="#000"/><rect x="93" y="303" width="2" height="1" fill="#000"/>
<g shape-rendering="crispEdges"><rect x="89.00" y="787" width="11.24" height="118" fill="#000100"/><rect x="99.94" y="787" width="8.50" height="118" fill="#020005"/><rect x="108.14" y="787" width="5.77" height="118" fill="#00010e"/><rect x="113.61" y="787" width="5.77" height="118" fill="#000113"/><rect x="119.08" y="787" width="5.77" height="118" fill="#010018"/><rect x="124.55" y="787" width="5.77" height="118" fill="#00011c"/><rect x="130.02" y="787" width="3.03" height="118" fill="#020021"/><rect x="132.75" y="787" width="3.03" height="118" fill="#000125"/><rect x="135.48" y="787" width="3.03" height="118" fill="#050025"/><rect x="138.22" y="787" width="5.77" height="118" fill="#00002a"/><rect x="143.69" y="787" width="3.03" height="118" fill="#01002f"/><rect x="146.42" y="787" width="5.77" height="118" fill="#000034"/><rect x="151.89" y="787" width="5.77" height="118" fill="#000139"/><rect x="157.36" y="787" width="5.77" height="118" fill="#00003f"/><rect x="162.83" y="787" width="5.77" height="118" fill="#000045"/><rect x="168.30" y="787" width="3.03" height="118" fill="#00014b"/><rect x="171.03" y="787" width="5.77" height="118" fill="#02004b"/><rect x="176.50" y="787" width="5.77" height="118" fill="#010052"/><rect x="181.97" y="787" width="3.03" height="118" fill="#00055b"/><rect x="184.70" y="787" width="5.77" height="118" fill="#010059"/><rect x="190.17" y="787" width="8.50" height="118" fill="#000061"/><rect x="198.38" y="787" width="3.03" height="118" fill="#00055b"/><rect x="201.11" y="787" width="3.03" height="118" fill="#010a5a"/><rect x="203.84" y="787" width="5.77" height="118" fill="#001059"/><rect x="209.31" y="787" width="3.03" height="118" fill="#011454"/><rect x="212.05" y="787" width="5.77" height="118" fill="#001a50"/><rect x="217.52" y="787" width="5.77" height="118" fill="#00224b"/><rect x="222.98" y="787" width="3.03" height="118" fill="#002647"/><rect x="225.72" y="787" width="3.03" height="118" fill="#002a40"/><rect x="228.45" y="787" width="3.03" height="118" fill="#012d3e"/><rect x="231.19" y="787" width="3.03" height="118" fill="#02313c"/><rect x="233.92" y="787" width="3.03" height="118" fill="#02343a"/><rect x="236.66" y="787" width="3.03" height="118" fill="#013838"/><rect x="239.39" y="787" width="3.03" height="118" fill="#003b36"/><rect x="242.12" y="787" width="3.03" height="118" fill="#003f35"/><rect x="244.86" y="787" width="3.03" height="118" fill="#02422d"/><rect x="247.59" y="787" width="3.03" height="118" fill="#00462b"/><rect x="250.33" y="787" width="3.03" height="118" fill="#004a28"/><rect x="253.06" y="787" width="3.03" height="118" fill="#054c26"/><rect x="255.80" y="787" width="3.03" height="118" fill="#005023"/><rect x="258.53" y="787" width="3.03" height="118" fill="#005520"/><rect x="261.27" y="787" width="3.03" height="118" fill="#04571d"/><rect x="264.00" y="787" width="3.03" height="118" fill="#005b19"/><rect x="266.73" y="787" width="3.03" height="118" fill="#065e14"/><rect x="269.47" y="787" width="3.03" height="118" fill="#006318"/><rect x="272.20" y="787" width="3.03" height="118" fill="#016412"/><rect x="274.94" y="787" width="5.77" height="118" fill="#006b0f"/><rect x="280.41" y="787" width="3.03" height="118" fill="#00710a"/><rect x="283.14" y="787" width="5.77" height="118" fill="#037502"/><rect x="288.61" y="787" width="13.97" height="118" fill="#017e00"/><rect x="302.28" y="787" width="5.77" height="118" fill="#008010"/><rect x="307.75" y="787" width="3.03" height="118" fill="#1a7f11"/><rect x="310.48" y="787" width="5.77" height="118" fill="#157f1b"/><rect x="315.95" y="787" width="3.03" height="118" fill="#257e1c"/><rect x="318.69" y="787" width="5.77" height="118" fill="#237f25"/><rect x="324.16" y="787" width="5.77" height="118" fill="#2c7f2d"/><rect x="329.62" y="787" width="5.77" height="118" fill="#347f34"/><rect x="335.09" y="787" width="5.77" height="118" fill="#3b7f3b"/><rect x="340.56" y="787" width="3.03" height="118" fill="#417f42"/><rect x="343.30" y="787" width="3.03" height="118" fill="#497f43"/><rect x="346.03" y="787" width="3.03" height="118" fill="#477f49"/><rect x="348.77" y="787" width="3.03" height="118" fill="#4f7f4a"/><rect x="351.50" y="787" width="5.77" height="118" fill="#547f51"/><rect x="356.97" y="787" width="5.77" height="118" fill="#597f58"/><rect x="362.44" y="787" width="3.03" height="118" fill="#5e805f"/><rect x="365.17" y="787" width="3.03" height="118" fill="#647e5f"/><rect x="367.91" y="787" width="3.03" height="118" fill="#638065"/><rect x="370.64" y="787" width="3.03" height="118" fill="#6a7f66"/><rect x="373.38" y="787" width="5.77" height="118" fill="#6e806d"/><rect x="378.84" y="787" width="3.03" height="118" fill="#738075"/><rect x="381.58" y="787" width="3.03" height="118" fill="#787e75"/><rect x="384.31" y="787" width="5.77" height="118" fill="#7f807e"/><rect x="389.78" y="787" width="3.03" height="118" fill="#807f82"/><rect x="392.52" y="787" width="3.03" height="118" fill="#837b80"/><rect x="395.25" y="787" width="3.03" height="118" fill="#847883"/><rect x="397.98" y="787" width="3.03" height="118" fill="#847487"/><rect x="400.72" y="787" width="3.03" height="118" fill="#877085"/><rect x="403.45" y="787" width="3.03" height="118" fill="#886e89"/><rect x="406.19" y="787" width="3.03" height="118" fill="#896a8d"/><rect x="408.92" y="787" width="3.03" height="118" fill="#8b668b"/><rect x="411.66" y="787" width="3.03" height="118" fill="#8c638f"/><rect x="414.39" y="787" width="3.03" height="118" fill="#90608e"/><rect x="417.12" y="787" width="3.03" height="118" fill="#905c92"/><rect x="419.86" y="787" width="3.03" height="118" fill="#915996"/><rect x="422.59" y="787" width="3.03" height="118" fill="#935494"/><rect x="425.33" y="787" width="3.03" height="118" fill="#955299"/><rect x="428.06" y="787" width="3.03" height="118" fill="#984d97"/><rect x="430.80" y="787" width="3.03" height="118" fill="#9a4a9d"/><rect x="433.53" y="787" width="3.03" height="118" fill="#9d469c"/><rect x="436.27" y="787" width="3.03" height="118" fill="#9d42a0"/><rect x="439.00" y="787" width="5.77" height="118" fill="#a13d9f"/><rect x="444.47" y="787" width="3.03" height="118" fill="#a239a5"/><rect x="447.20" y="787" width="3.03" height="118" fill="#a734a5"/><rect x="449.94" y="787" width="5.77" height="118" fill="#a72ea9"/><rect x="455.41" y="787" width="3.03" height="118" fill="#ab28a9"/><rect x="458.14" y="787" width="5.77" height="118" fill="#ad22ae"/><rect x="463.61" y="787" width="5.77" height="118" fill="#b21ab0"/><rect x="469.08" y="787" width="8.50" height="118" fill="#b611b7"/><rect x="477.28" y="787" width="5.77" height="118" fill="#bb00b8"/><rect x="482.75" y="787" width="3.03" height="118" fill="#ba09bf"/><rect x="485.48" y="787" width="3.03" height="118" fill="#c000c0"/><rect x="488.22" y="787" width="3.03" height="118" fill="#c200bb"/><rect x="490.95" y="787" width="5.77" height="118" fill="#c005b5"/><rect x="496.42" y="787" width="3.03" height="118" fill="#c405b1"/><rect x="499.16" y="787" width="3.03" height="118" fill="#c601ab"/><rect x="501.89" y="787" width="3.03" height="118" fill="#c902a7"/><rect x="504.62" y="787" width="5.77" height="118" fill="#cc00a2"/><rect x="510.09" y="787" width="3.03" height="118" fill="#ce009e"/><rect x="512.83" y="787" width="3.03" height="118" fill="#d01695"/><rect x="515.56" y="787" width="3.03" height="118" fill="#d10099"/><rect x="518.30" y="787" width="3.03" height="118" fill="#d01695"/><rect x="521.03" y="787" width="3.03" height="118" fill="#d31791"/><rect x="523.77" y="787" width="3.03" height="118" fill="#d6188c"/><rect x="526.50" y="787" width="3.03" height="118" fill="#d71687"/><rect x="529.23" y="787" width="3.03" height="118" fill="#da1883"/><rect x="531.97" y="787" width="5.77" height="118" fill="#dd1a80"/><rect x="537.44" y="787" width="3.03" height="118" fill="#e01c7c"/><rect x="540.17" y="787" width="3.03" height="118" fill="#e21d78"/><rect x="542.91" y="787" width="3.03" height="118" fill="#e41e74"/><rect x="545.64" y="787" width="3.03" height="118" fill="#e72070"/><rect x="548.38" y="787" width="5.77" height="118" fill="#e8206b"/><rect x="553.84" y="787" width="5.77" height="118" fill="#eb2e64"/><rect x="559.31" y="787" width="3.03" height="118" fill="#ed2f5a"/><rect x="562.05" y="787" width="3.03" height="118" fill="#f13156"/><rect x="564.78" y="787" width="5.77" height="118" fill="#f33352"/><rect x="570.25" y="787" width="3.03" height="118" fill="#f6354e"/><rect x="572.98" y="787" width="3.03" height="118" fill="#f8364a"/><rect x="575.72" y="787" width="3.03" height="118" fill="#fb3946"/><rect x="578.45" y="787" width="5.77" height="118" fill="#fc3a41"/><rect x="583.92" y="787" width="3.03" height="118" fill="#fe3e3e"/><rect x="586.66" y="787" width="5.77" height="118" fill="#fe463f"/><rect x="592.12" y="787" width="3.03" height="118" fill="#fe4e41"/><rect x="594.86" y="787" width="5.77" height="118" fill="#fe563d"/><rect x="600.33" y="787" width="3.03" height="118" fill="#fe5e40"/><rect x="603.06" y="787" width="3.03" height="118" fill="#fe6441"/><rect x="605.80" y="787" width="8.50" height="118" fill="#fe6d3e"/><rect x="614.00" y="787" width="3.03" height="118" fill="#fe783c"/><rect x="616.73" y="787" width="5.77" height="118" fill="#fe803f"/><rect x="622.20" y="787" width="3.03" height="118" fill="#fc8741"/><rect x="624.94" y="787" width="5.77" height="118" fill="#fe8a3d"/><rect x="630.41" y="787" width="3.03" height="118" fill="#fe9241"/><rect x="633.14" y="787" width="5.77" height="118" fill="#fe9a3d"/><rect x="638.61" y="787" width="3.03" height="118" fill="#fea23d"/><rect x="641.34" y="787" width="3.03" height="118" fill="#feaa3e"/><rect x="644.08" y="787" width="3.03" height="118" fill="#fdaf40"/><rect x="646.81" y="787" width="5.77" height="118" fill="#feb53b"/><rect x="652.28" y="787" width="3.03" height="118" fill="#febd41"/><rect x="655.02" y="787" width="5.77" height="118" fill="#fec43d"/><rect x="660.48" y="787" width="3.03" height="118" fill="#fecc41"/><rect x="663.22" y="787" width="5.77" height="118" fill="#fdd43d"/><rect x="668.69" y="787" width="3.03" height="118" fill="#fcdb37"/><rect x="671.42" y="787" width="5.77" height="118" fill="#fee33e"/><rect x="676.89" y="787" width="3.03" height="118" fill="#feea39"/><rect x="679.62" y="787" width="5.77" height="118" fill="#fdef46"/><rect x="685.09" y="787" width="5.77" height="118" fill="#fdf054"/><rect x="690.56" y="787" width="8.50" height="118" fill="#fcf061"/><rect x="698.77" y="787" width="5.77" height="118" fill="#feef69"/><rect x="704.23" y="787" width="8.50" height="118" fill="#feee75"/><rect x="712.44" y="787" width="3.03" height="118" fill="#fdf07f"/><rect x="715.17" y="787" width="8.50" height="118" fill="#feef8a"/><rect x="723.38" y="787" width="11.24" height="118" fill="#fdef99"/><rect x="734.31" y="787" width="54.69" height="118" fill="#feefa7"/></g>
<rect x="1236" y="30" width="1" height="5" fill="#9595d3"/><rect x="1232" y="34" width="5" height="1" fill="#9595d3"/><rect x="1243" y="30" width="1" height="5" fill="#9595d3"/><rect x="1239" y="34" width="5" height="1" fill="#9595d3"/><rect x="1250" y="30" width="1" height="890" fill="#9595d3"/><rect x="1246" y="919" width="5" height="1" fill="#9595d3"/><rect x="1243" y="56" width="1" height="864" fill="#9595d3"/><rect x="1239" y="56" width="5" height="1" fill="#9595d3"/><rect x="1239" y="919" width="5" height="1" fill="#9595d3"/><rect x="1236" y="56" width="1" height="236" fill="#9595d3"/><path d="M1231 56.5H1237M1231.5 56.7L1236.3 61.8" stroke="#9595d3" fill="none"/><rect x="1232" y="291" width="5" height="1" fill="#9595d3"/><rect x="1236" y="303" width="1" height="455" fill="#9595d3"/><path d="M1231 303.5H1237M1231.5 303.7L1236.3 308.8M1233 309.5H1237" stroke="#9595d3" fill="none"/><rect x="1232" y="757" width="5" height="1" fill="#9595d3"/><rect x="1236" y="774" width="1" height="146" fill="#9595d3"/><path d="M1231 774.5H1237M1231.5 774.7L1236.3 779.8M1233 780.5H1237" stroke="#9595d3" fill="none"/><rect x="1232" y="919" width="5" height="1" fill="#9595d3"/>
</svg>
<div class="tk" style="left:206.1px;top:746px;width:40px;text-align:center">50</div>
<div class="tk" style="left:46.500px;top:652.0px;width:41px;text-align:right">50</div>
<div class="tk" style="left:342.2px;top:746px;width:40px;text-align:center">100</div>
<div class="tk" style="left:46.500px;top:567.5px;width:41px;text-align:right">100</div>
<div class="tk" style="left:478.3px;top:746px;width:40px;text-align:center">150</div>
<div class="tk" style="left:46.500px;top:482.9px;width:41px;text-align:right">150</div>
<div class="tk" style="left:614.4px;top:746px;width:40px;text-align:center">200</div>
<div class="tk" style="left:46.500px;top:398.4px;width:41px;text-align:right">200</div>
<div class="tk" style="left:750.6px;top:746px;width:40px;text-align:center">250</div>
<div class="tk" style="left:46.500px;top:313.9px;width:41px;text-align:right">250</div>

<!-- scrollbar -->
<div class="abs" style="left:1256px;top:30px;width:16px;height:890px;background:linear-gradient(90deg,#e6e6e6 0,#ededed 4px,#f1f1f1 100%)"></div>
<svg class="abs" style="left:1256px;top:30px" width="16" height="890" viewBox="0 0 16 890">
 <path d="M4.500 10.800L8 6.500L11.500 10.800Z" fill="#3c3c3c"/>
 <path d="M4.500 880L11.500 880L8 884.500Z" fill="#505050"/>
 <defs><linearGradient id="tg" x1="0" x2="1" y1="0" y2="0"><stop offset="0" stop-color="#f4f4f4"/><stop offset="0.45" stop-color="#e6e6e6"/><stop offset="0.5" stop-color="#d4d4d4"/><stop offset="1" stop-color="#c4c4c4"/></linearGradient></defs>
 <rect x="0.500" y="732.500" width="14" height="66" rx="2" fill="url(#tg)" stroke="#999"/>
 <path d="M4 761.500h7M4 764.500h7M4 767.500h7" stroke="#444" stroke-width="1.2"/><path d="M4 762.700h7M4 765.700h7M4 768.700h7" stroke="#fff" stroke-width="1"/>
</svg>
<!-- status bar -->
<div class="abs" style="left:8px;top:920px;width:1264px;height:17px;background:#efefef"></div>
<div class="abs" style="left:1199px;top:921px;width:1px;height:15px;background:#d4d4d4"></div>
<div class="abs" style="left:1200px;top:921px;width:1px;height:15px;background:#fafafa"></div>
<div class="abs" style="left:1206px;top:921px;font-family:'Liberation Serif',serif;font-size:12.5px;letter-spacing:-0.7px;line-height:15px;color:#000;will-change:transform">100%</div>
<svg class="abs" style="left:1240px;top:922px" width="32" height="15" viewBox="0 0 32 15">
 <path d="M2.500 8.500L6.500 3.800L10.500 8.500Z" fill="#000"/>
 <g fill="#c4c4c4"><rect x="28" y="5" width="2" height="2"/><rect x="25" y="8" width="2" height="2"/><rect x="28" y="8" width="2" height="2"/><rect x="22" y="11" width="2" height="2"/><rect x="25" y="11" width="2" height="2"/><rect x="28" y="11" width="2" height="2"/></g>
</svg>
<!-- bottom frame + taskbar -->
<div class="abs" style="left:0;top:937px;width:1280px;height:1px;background:#2a2a2a"></div>
<div class="abs" style="left:0;top:938px;width:1280px;height:7px;background:linear-gradient(180deg,#7a7a7a 0,#4a4a4a 1px,#3e3e3e 100%)"></div>
<div class="abs" style="left:1266px;top:938px;width:14px;height:7px;background:linear-gradient(180deg,#8a8a8a,#6a6a6a);border-left:1px solid #333"></div>
<!-- taskbar buttons -->
<div class="abs" style="left:262px;top:939px;width:160px;height:8px;border:1px solid #e4e4e4;border-right:none;border-radius:3px 0 0 0;box-sizing:border-box;background:linear-gradient(90deg,#d4d4d4,#b0b0b0 50%,#858585)"></div>
<div class="abs" style="left:422px;top:939px;width:158px;height:8px;border:1px solid #e4e4e4;border-left:none;border-radius:0 3px 0 0;box-sizing:border-box;background:linear-gradient(90deg,#c8c8c8,#a8a8a8 50%,#808080)"></div>
<div class="abs" style="left:272px;top:942px;width:11px;height:3px;background:#f0dc78"></div>
<div class="abs" style="left:432px;top:942px;width:11px;height:3px;background:#f0dc78"></div>
<div class="abs" style="left:585px;top:939px;width:158px;height:8px;border:1px solid #b8b8b8;border-radius:3px;box-sizing:border-box;background:linear-gradient(90deg,#8c8c8c,#7a7a7a 60%,#6c6c6c)"></div>
<div class="abs" style="left:596px;top:943px;width:4px;height:2px;background:#4a90d8"></div>
<div class="abs" style="left:746px;top:939px;width:158px;height:8px;border:1px solid #f0f0f0;border-radius:3px;box-sizing:border-box;background:linear-gradient(90deg,#d0d0d0,#bcbcbc 60%,#a4a4a4)"></div>
<div class="abs" style="left:908px;top:939px;width:158px;height:8px;border:1px solid #d8d8d8;border-radius:3px;box-sizing:border-box;background:linear-gradient(90deg,#c4c4c4,#a0a0a0 50%,#6e6e6e)"></div>
<div class="abs" style="left:918px;top:942px;width:14px;height:3px;background:#8cc0ec"></div>
<!-- quick launch bits -->
<div class="abs" style="left:68px;top:943px;width:3px;height:2px;background:#f0a020"></div>
<div class="abs" style="left:87px;top:943px;width:4px;height:2px;background:#3a80c8"></div>
<div class="abs" style="left:135px;top:943px;width:1px;height:2px;background:#ccc"></div>
<div class="abs" style="left:156px;top:943px;width:9px;height:2px;background:repeating-linear-gradient(90deg,#ddd 0,#ddd 1px,transparent 1px,transparent 2px)"></div>
<div class="abs" style="left:176px;top:943px;width:12px;height:2px;background:#58a0d0"></div>
<div class="abs" style="left:220px;top:943px;width:16px;height:2px;background:#b080c0"></div>
<!-- start orb -->
<div class="abs" style="left:10px;top:931px;width:35px;height:35px;border-radius:50%;box-sizing:border-box;border:1.5px solid #1d4f80;background:radial-gradient(circle at 50% 25%,#cfe0ee 0,#9dbdd8 35%,#4a80b0 80%)"></div>
<div class="abs" style="left:19px;top:939px;width:9px;height:8px;background:linear-gradient(180deg,#f08038,#d84818);border-radius:3px 1px 0 0;transform:skewY(-10deg)"></div>
<div class="abs" style="left:29px;top:941px;width:9px;height:8px;background:linear-gradient(180deg,#a8d060,#5aa82c);border-radius:1px 3px 0 0;transform:skewY(10deg)"></div>

</body></html>
